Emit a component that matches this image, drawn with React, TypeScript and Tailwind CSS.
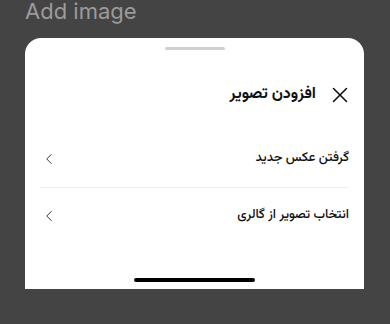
import { X, ChevronLeft } from "lucide-react";

const fa = { fontFamily: '"Vazirmatn", "Noto Sans Arabic", "DejaVu Sans", sans-serif' };

export default function App() {
  return (
    <div className="w-[390px] h-[324px] bg-[#444444] overflow-hidden">
      {/* Page title, partly scrolled off */}
      <div
        className="pl-[25px] text-[22px] leading-[22px] text-[#9b9b9b]"
        style={{ fontFamily: "Inter, sans-serif" }}
      >
        Add image
      </div>

      {/* Bottom sheet */}
      <div className="ml-[25px] mt-[16px] w-[339px] h-[251px] bg-white rounded-t-[16px] flex flex-col" dir="rtl" style={fa}>
        <div className="mt-[9px] mx-auto w-[60px] h-[3px] rounded-full bg-[#d0d0d0]" />

        <div className="mt-[32px] h-[26px] flex items-center gap-[11px] pr-[11px]">
          <X size={26} strokeWidth={1.4} className="text-[#111]" />
          <span className="text-[16px] font-bold text-[#111]">افزودن تصویر</span>
        </div>

        <div className="mx-[15px] mt-[24px]">
          <div className="h-[56px] flex items-center justify-between border-b border-[#eeeeee] pb-[1px]">
            <span className="text-[13px] font-medium text-[#111]">گرفتن عکس جدید</span>
            <ChevronLeft size={18} strokeWidth={1.3} className="text-[#333]" />
          </div>
          <div className="h-[56px] flex items-center justify-between">
            <span className="text-[13px] font-medium text-[#111]">انتخاب تصویر از گالری</span>
            <ChevronLeft size={18} strokeWidth={1.3} className="text-[#333]" />
          </div>
        </div>

        <div className="mt-auto mb-[7px] mx-auto w-[121px] h-[4px] rounded-full bg-black" />
      </div>
    </div>
  );
}
